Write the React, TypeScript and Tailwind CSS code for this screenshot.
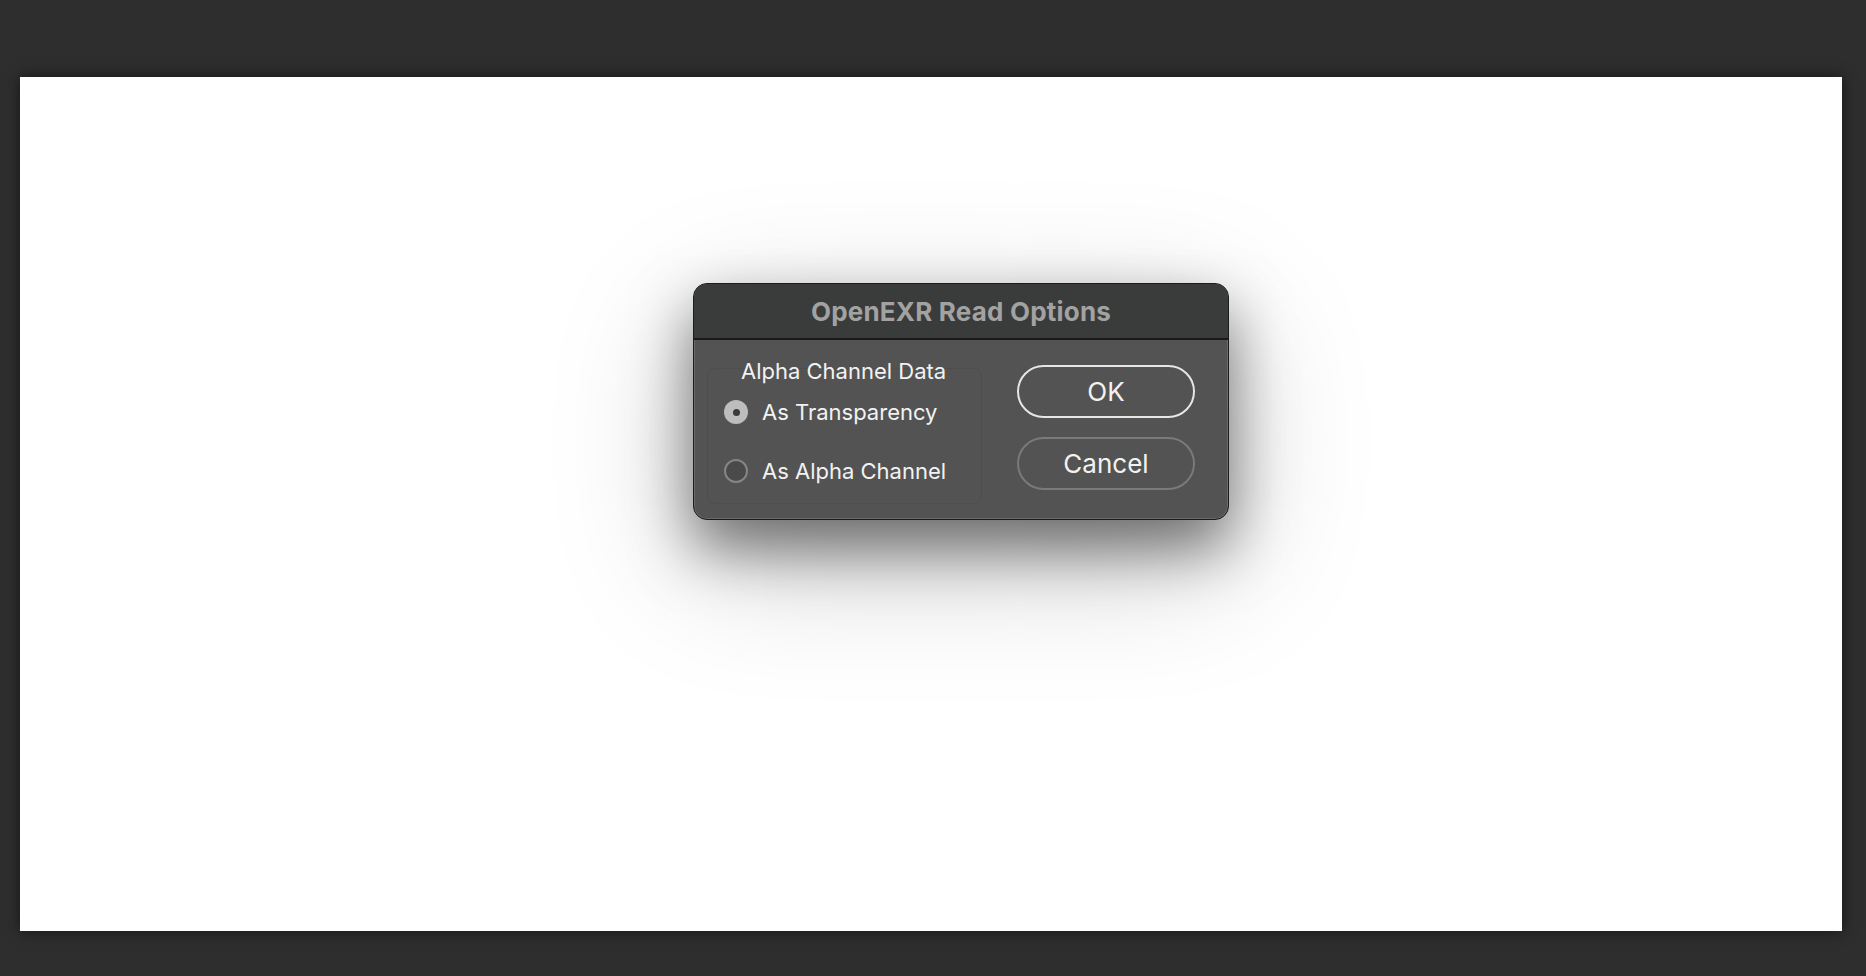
import React from "react";

function Radio({ checked, label }: { checked: boolean; label: string }) {
  return (
    <div className="flex h-[40px] items-center gap-[14px]">
      {checked ? (
        <div className="flex h-[24px] w-[24px] items-center justify-center rounded-full bg-[#bdbdbd]">
          <div className="h-[7px] w-[7px] rounded-full bg-[#3a3a3a]" />
        </div>
      ) : (
        <div className="h-[24px] w-[24px] rounded-full border-2 border-[#858585] bg-[#4a4a4a]" />
      )}
      <span className="text-[22px] leading-[26px] text-[#f2f2f2]">{label}</span>
    </div>
  );
}

export default function App() {
  return (
    <div
      className="h-[976px] w-[1866px] overflow-hidden bg-[#2e2e2e] pl-[20px] pt-[77px]"
      style={{ fontFamily: "Inter, 'Liberation Sans', sans-serif" }}
    >
      <div className="h-[854px] w-[1822px] bg-white pl-[673px] pt-[206px] shadow-[0_0_14px_rgba(0,0,0,0.55)]">
        <div className="flex h-[237px] w-[536px] flex-col overflow-hidden rounded-[14px] border border-[#1c1c1c] bg-[#535353] shadow-[inset_0_0_0_1px_#6a6a6a,0_28px_60px_rgba(0,0,0,0.5),0_40px_140px_rgba(0,0,0,0.22)]">
          <div className="flex h-[56px] shrink-0 items-center justify-center border-b-2 border-[#1a1a1a] bg-[#3a3b3b]">
            <span className="text-[26px] font-bold tracking-[0.2px] text-[#a2a2a2]">OpenEXR Read Options</span>
          </div>
          <div className="flex flex-1">
            <div className="ml-[13px] mt-[28px] h-[136px] w-[275px] rounded-[8px] border border-[#4e4e4e] pl-[16px]">
              <div className="-mt-[11px] ml-[17px] text-[22px] leading-[26px] text-[#f2f2f2]">Alpha Channel Data</div>
              <div className="mt-[8px] flex flex-col gap-[19px]">
                <Radio checked label="As Transparency" />
                <Radio checked={false} label="As Alpha Channel" />
              </div>
            </div>
            <div className="ml-auto mr-[33px] mt-[25px] flex flex-col gap-[19px]">
              <button className="flex h-[53px] w-[178px] items-center justify-center rounded-full border-2 border-[#e6e6e6] text-[26px] text-[#f2f2f2]">
                OK
              </button>
              <button className="flex h-[53px] w-[178px] items-center justify-center rounded-full border-2 border-[#7a7a7a] text-[26px] text-[#f2f2f2]">
                Cancel
              </button>
            </div>
          </div>
        </div>
      </div>
    </div>
  );
}
